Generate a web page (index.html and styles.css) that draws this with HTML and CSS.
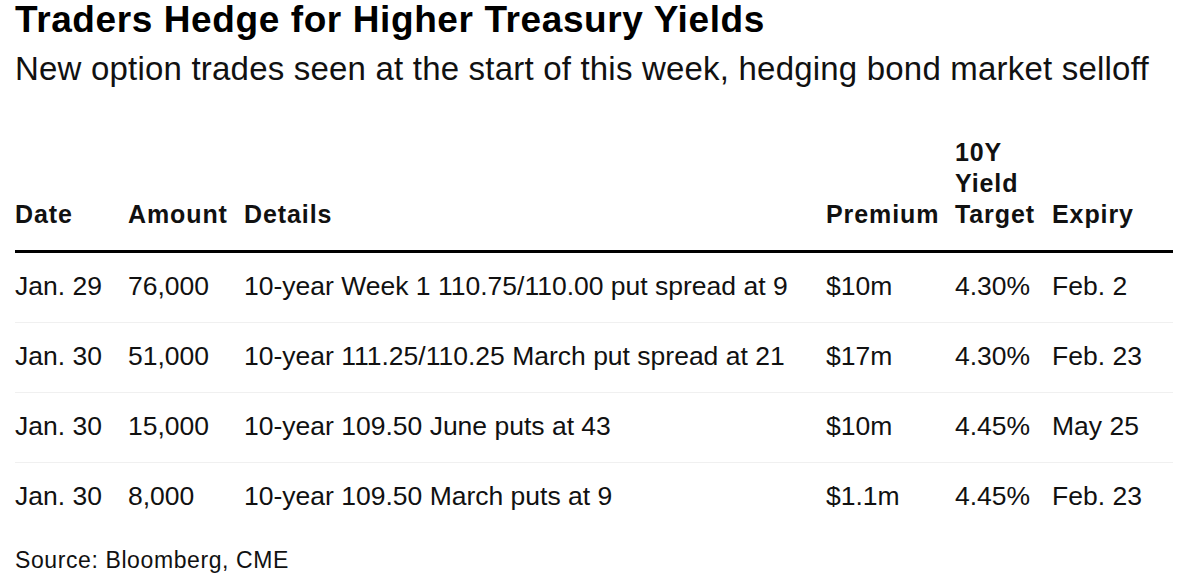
FILE: index.html
```html
<!DOCTYPE html>
<html lang="en">
<head>
<meta charset="utf-8">
<title>Traders Hedge for Higher Treasury Yields</title>
<link rel="stylesheet" href="styles.css">
</head>
<body>
<main class="chart">
  <h1 class="title">Traders Hedge for Higher Treasury Yields</h1>
  <p class="subtitle">New option trades seen at the start of this week, hedging bond market selloff</p>
  <table class="trades">
    <colgroup>
      <col class="c-date"><col class="c-amount"><col class="c-details"><col class="c-premium"><col class="c-yield"><col class="c-expiry">
    </colgroup>
    <thead>
      <tr>
        <th>Date</th>
        <th>Amount</th>
        <th>Details</th>
        <th>Premium</th>
        <th>10Y<br>Yield<br>Target</th>
        <th>Expiry</th>
      </tr>
    </thead>
    <tbody>
      <tr><td>Jan. 29</td><td>76,000</td><td>10-year Week 1 110.75/110.00 put spread at 9</td><td>$10m</td><td>4.30%</td><td>Feb. 2</td></tr>
      <tr><td>Jan. 30</td><td>51,000</td><td>10-year 111.25/110.25 March put spread at 21</td><td>$17m</td><td>4.30%</td><td>Feb. 23</td></tr>
      <tr><td>Jan. 30</td><td>15,000</td><td>10-year 109.50 June puts at 43</td><td>$10m</td><td>4.45%</td><td>May 25</td></tr>
      <tr><td>Jan. 30</td><td>8,000</td><td>10-year 109.50 March puts at 9</td><td>$1.1m</td><td>4.45%</td><td>Feb. 23</td></tr>
    </tbody>
  </table>
  <p class="source">Source: Bloomberg, CME</p>
</main>
</body>
</html>
```

FILE: styles.css
```css
html, body {
  margin: 0;
  padding: 0;
  background: #ffffff;
}
body {
  font-family: "Liberation Sans", Arial, sans-serif;
  color: #000000;
}
.chart {
  padding: 0 7px 0 15px;
}
.title {
  margin: 0;
  font-size: 37px;
  line-height: 40px;
  font-weight: 700;
  letter-spacing: 0.6px;
  color: #000000;
}
.subtitle {
  margin: 10px 0 0 0;
  font-size: 33px;
  line-height: 38px;
  font-weight: 400;
  letter-spacing: 0.2px;
  color: #111111;
}
.trades {
  width: 100%;
  margin-top: 49px;
  border-collapse: collapse;
  table-layout: fixed;
}
.c-date { width: 113px; }
.c-amount { width: 116px; }
.c-details { width: 582px; }
.c-premium { width: 129px; }
.c-yield { width: 97px; }
.c-expiry { width: auto; }
.trades th {
  text-align: left;
  vertical-align: bottom;
  font-size: 25px;
  line-height: 31px;
  font-weight: 700;
  letter-spacing: 0.9px;
  padding: 0 0 20px 0;
  border-bottom: 3px solid #000000;
  color: #111111;
}
.trades td {
  font-size: 26.5px;
  line-height: 30px;
  padding: 18px 0 21px 0;
  border-bottom: 1px solid #f0f0f0;
  color: #111111;
  white-space: nowrap;
}
.trades tbody tr:last-child td {
  border-bottom: none;
}
.source {
  margin: 15px 0 0 0;
  font-size: 23px;
  line-height: 26px;
  letter-spacing: 0.6px;
  color: #111111;
}
```
